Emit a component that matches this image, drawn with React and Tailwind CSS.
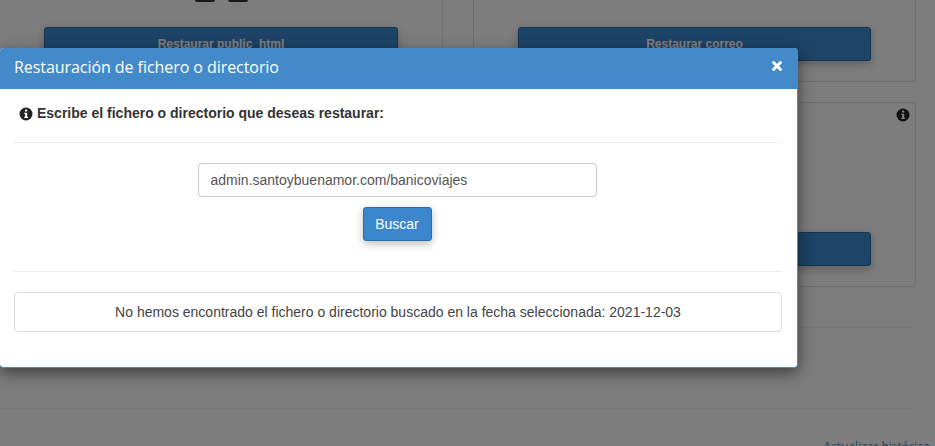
import { X } from 'lucide-react';

function InfoDot({ className }) {
  return (
    <svg className={className} viewBox="0 0 14 14">
      <circle cx="7" cy="7" r="6.5" fill="currentColor" />
      <rect x="6" y="2.6" width="2.2" height="2" rx="0.4" fill="#fff" />
      <path d="M5.2 5.8h3v3.9h.9v1.3H5.2V9.7h.9V7.1h-.9z" fill="#fff" />
    </svg>
  );
}

function BackButton({ label, className }) {
  return (
    <div className={`h-[34px] rounded-[3px] border border-[#2a6aa8] bg-[#3a86cd] shadow-[0_3px_8px_rgba(0,0,0,0.25)] flex justify-center pt-[7px] text-[12px] font-bold text-white ${className}`}>
      {label}
    </div>
  );
}

export default function App() {
  return (
    <div className="relative h-[446px] w-[935px] overflow-hidden bg-[#fafafa] font-['Liberation_Sans',sans-serif]">
      {/* ── Page behind the modal ── */}
      <div className="flex flex-col h-full">
        <div className="flex shrink-0 h-[328px] border-b border-[#eee] mr-[19px]">
          <div className="w-[443px] h-[300px] border-r border-[#e4e4e4] pl-[44px]">
            <div className="flex gap-[13px] pl-[151px] h-[27px]">
              <div className="w-5 h-[2px] rounded-b-sm bg-[#333]" />
              <div className="w-5 h-[2px] rounded-b-sm bg-[#333]" />
            </div>
            <BackButton label="Restaurar public_html" className="w-[354px]" />
          </div>
          <div className="flex flex-col pl-[30px] w-[473px]">
            <div className="h-[82px] w-[443px] border border-t-0 border-[#ddd] rounded-b-[4px] pl-[44px] pt-[27px]">
              <BackButton label="Restaurar correo" className="w-[353px]" />
            </div>
            <div className="relative mt-5 h-[185px] w-[443px] border border-[#ddd] rounded-[4px] flex justify-end items-end pr-[44px] pb-5">
              <InfoDot className="absolute right-[5px] top-[5px] w-[14px] h-[14px] text-[#222]" />
              <div className="h-[34px] w-[200px] rounded-[3px] border border-[#2a6aa8] bg-[#3a86cd] shadow-[0_3px_8px_rgba(0,0,0,0.25)]" />
            </div>
          </div>
        </div>
        <div className="shrink-0 h-[81px] border-b border-[#f0f0f0] mr-[19px]" />
        <div className="flex shrink-0 justify-end pr-[5px] pt-[29px] font-['Open_Sans',sans-serif] text-[12px] text-[#3c8dbc]">
          Actualizar histórico
        </div>
      </div>

      {/* ── Overlay ── */}
      <div className="absolute inset-0 bg-black/50" />

      {/* ── Modal ── */}
      <div className="absolute left-0 top-[48px] w-[798px] h-[320px] bg-white border-r border-b border-[#428bca] rounded-[4px] shadow-[0_5px_15px_rgba(0,0,0,0.5)] text-[#333]">
        <div className="flex items-center justify-between h-[41px] bg-[#428aca] rounded-t-[4px] pl-[14px] pr-[14px] -mr-px">
          <h4 className="font-['Open_Sans',sans-serif] text-[16px] tracking-[-0.06px] text-white -mt-[3px]">Restauración de fichero o directorio</h4>
          <X className="w-[14px] h-[14px] text-white -mt-[5px]" strokeWidth={5} />
        </div>
        <div className="pl-[14px] pr-[15px]">
          <div className="flex items-center gap-[4px] h-[54px] pl-[5px] border-b border-[#eee] pb-[4px] text-[14px] font-bold">
            <InfoDot className="w-[14px] h-[14px] text-[#222]" />
            <span>Escribe el fichero o directorio que deseas restaurar:</span>
          </div>
          <div className="flex flex-col items-center pt-[20px] pr-[2px] h-[129px] border-b border-[#eee]">
            <div className="w-[399px] h-[34px] border border-[#ccc] rounded-[4px] px-3 flex items-center text-[14px] text-[#555]">
              admin.santoybuenamor.com/banicoviajes
            </div>
            <button className="mt-[10px] w-[69px] h-[34px] rounded-[3px] border border-[#2e6da4] bg-[#3a87cd] text-[14px] text-white shadow-[0_3px_8px_rgba(0,0,0,0.25)]">
              Buscar
            </button>
          </div>
          <div className="mt-5 h-[40px] border border-[#ddd] rounded-[4px] flex items-center justify-center text-[14px] text-[#444]">
            No hemos encontrado el fichero o directorio buscado en la fecha seleccionada: 2021-12-03
          </div>
        </div>
      </div>
    </div>
  );
}
